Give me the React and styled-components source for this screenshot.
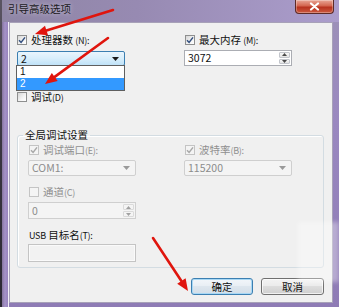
import React from "react";
import styled, { createGlobalStyle, css } from "styled-components";

const GlobalStyle = createGlobalStyle`
  html, body { margin: 0; padding: 0; }
  body {
    background: #2e2a36;
    font-family: "Noto Sans CJK SC", "Noto Sans", sans-serif;
  }
  *, *::before, *::after { box-sizing: border-box; }
`;

const FONT = `"Noto Sans CJK SC", "Noto Sans", sans-serif`;

const Screen = styled.div`
  position: relative;
  width: 339px;
  height: 307px;
  overflow: hidden;
  display: flex;
`;

const DesktopEdge = styled.div`
  width: 3px;
  background: linear-gradient(180deg, #5a5462 0%, #3a3642 45%, #2b2833 100%);
`;

const Frame = styled.div`
  flex: 1;
  display: flex;
  flex-direction: column;
  padding: 0 6px 4px 7px;
  background:
    linear-gradient(90deg, #86759f 0px, #a592c8 3px, #9783bd 6px, #f2eff8 6px, #f2eff8 7px, transparent 7px),
    linear-gradient(180deg, #9d92b7 0%, #9a88c0 40%, #8e7bb5 100%);
`;

const TitleBar = styled.div`
  height: 22px;
  margin: 0 -6px 0 -7px;
  padding: 0 5px 0 6px;
  display: flex;
  align-items: flex-start;
  justify-content: space-between;
  background: linear-gradient(90deg, #8f86a5 0%, #978ab2 40%, #ab9dcc 100%);
`;

const Title = styled.span`
  margin-top: 2px;
  font-family: ${FONT};
  font-size: 10.5px;
  line-height: 14px;
  color: #1c1a22;
  text-shadow: 0 0 5px rgba(255, 255, 255, 0.55);
`;

const CloseButton = styled.div`
  width: 39px;
  height: 14px;
  display: flex;
  align-items: center;
  justify-content: center;
  border: 1px solid #5d2a26;
  border-top: none;
  border-radius: 0 0 4px 4px;
  background: linear-gradient(180deg, #e9a797 0%, #d3654f 45%, #b7321f 55%, #cc5a40 100%);
  box-shadow: inset 0 0 0 1px rgba(255, 255, 255, 0.3);
`;

const Client = styled.div`
  flex: 1;
  display: flex;
  flex-direction: column;
  background: #f0f0f0;
  border: 1px solid #a7a1b8;
  padding: 10px 8px 7px 7px;
`;

const Columns = styled.div`
  display: grid;
  grid-template-columns: ${(p) => p.$left}px ${(p) => p.$right}px;
  align-items: start;
`;

const Stack = styled.div`
  display: flex;
  flex-direction: column;
`;

const Slot = styled.div`
  position: relative;
  margin-top: ${(p) => p.$mt || 0}px;
`;

const CheckRow = styled.label`
  height: 14px;
  display: flex;
  align-items: center;
  gap: 4px;
  padding-left: ${(p) => p.$inset || 0}px;
  font-family: ${FONT};
  font-size: 10.5px;
  line-height: 14px;
  white-space: nowrap;
  color: ${(p) => (p.$disabled ? "#8f8f8f" : "#111")};
`;

const Box = styled.span`
  width: 10px;
  height: 10px;
  flex: none;
  display: flex;
  align-items: center;
  justify-content: center;
  border: 1px solid ${(p) => (p.$disabled ? "#c4c4c4" : "#8e8f8f")};
  background: ${(p) =>
    p.$disabled ? "#f4f4f4" : "linear-gradient(135deg, #d6d6d6 0%, #f4f4f4 60%, #ffffff 100%)"};
`;

const PlainLabel = styled.div`
  height: 14px;
  font-family: ${FONT};
  font-size: 10.5px;
  line-height: 14px;
  white-space: nowrap;
  color: #111;
  padding-left: 1px;
`;

const Small = styled.span`
  font-size: 9px;
  letter-spacing: -0.3px;
`;

const fieldBase = css`
  width: 108px;
  height: ${(p) => p.$h || 15}px;
  display: flex;
  align-items: center;
  font-family: ${FONT};
  font-size: 10.5px;
  line-height: 12px;
`;

const Combo = styled.div`
  ${fieldBase};
  justify-content: space-between;
  padding: 0 5px 0 3px;
  border-radius: 2px;
  border: 1px solid #adadad;
  background: linear-gradient(180deg, #f2f2f2, #e2e2e2);
  color: #111;
  ${(p) =>
    p.$open &&
    css`
      border-color: #3c7fb1;
      background: linear-gradient(180deg, #eaf5fd 0%, #d8eefb 50%, #bfe2f8 100%);
    `}
  ${(p) =>
    p.$disabled &&
    css`
      border-color: #cfcfcf;
      background: #f4f4f4;
      color: #8c8c8c;
    `}
`;

const DropList = styled.div`
  position: absolute;
  left: -1px;
  top: calc(100% - 1px);
  width: 109px;
  background: #ffffff;
  border: 1px solid #5f5f5f;
  z-index: 2;
`;

const DropItem = styled.div`
  height: 12px;
  padding-left: 3px;
  font-family: "Liberation Sans", Arial, sans-serif;
  font-size: 10px;
  line-height: 12px;
  color: ${(p) => (p.$selected ? "#fff" : "#111")};
  background: ${(p) => (p.$selected ? "#3399ff" : "transparent")};
`;

const SpinBox = styled.div`
  ${fieldBase};
  border: 1px solid ${(p) => (p.$disabled ? "#cfcfcf" : "#abadb3")};
  background: ${(p) => (p.$disabled ? "#f4f4f4" : "#ffffff")};
  color: ${(p) => (p.$disabled ? "#8c8c8c" : "#111")};
`;

const SpinText = styled.span`
  flex: 1;
  padding-left: 3px;
`;

const SpinButtons = styled.div`
  width: 12px;
  align-self: stretch;
  display: flex;
  flex-direction: column;
  padding: 1px 1px 1px 0;
  gap: 1px;
`;

const SpinButton = styled.div`
  flex: 1;
  display: flex;
  align-items: center;
  justify-content: center;
  border: 1px solid ${(p) => (p.$disabled ? "#dadada" : "#c3c6cc")};
  border-radius: 1px;
  background: ${(p) => (p.$disabled ? "#f4f4f4" : "linear-gradient(180deg, #f7f7f7, #e4e4e4)")};
`;

const TextBox = styled.div`
  ${fieldBase};
  border: 1px solid #c4c4c4;
  background: #f2f2f2;
  box-shadow: inset 0 0 0 1px #fafafa;
`;

const Group = styled.fieldset`
  margin: 24px 0 0 0;
  padding: 0;
  width: 307px;
  border: 1px solid #d3dce2;
  border-radius: 3px;
  box-shadow: inset 1px 1px 0 #ffffff;
`;

const GroupTitle = styled.legend`
  margin-left: 5px;
  padding: 0 2px;
  font-family: ${FONT};
  font-size: 10.5px;
  line-height: 14px;
  color: #111;
`;

const GroupBody = styled.div`
  padding: 1px 0 5px 10px;
`;

const ButtonRow = styled.div`
  margin-top: auto;
  display: flex;
  justify-content: flex-end;
  gap: 8px;
`;

const Button = styled.button`
  width: ${(p) => p.$w}px;
  height: 17px;
  padding: 0;
  font-family: ${FONT};
  font-size: 10.5px;
  line-height: 13px;
  color: #111;
  border-radius: 3px;
  border: 1px solid #707070;
  background: linear-gradient(180deg, #f3f3f3 0%, #ebebeb 49%, #dddddd 50%, #cfcfcf 100%);
  box-shadow: inset 0 0 0 1px rgba(255, 255, 255, 0.7);
  ${(p) =>
    p.$default &&
    css`
      border-color: #3c7fb1;
      background: linear-gradient(180deg, #f2f6fa 0%, #e8eef4 49%, #dde6ee 50%, #d3dee8 100%);
      box-shadow: inset 0 0 0 1px #a8d8f5;
    `}
`;

const Annotations = styled.svg`
  position: absolute;
  left: 0;
  top: 0;
  width: 339px;
  height: 307px;
  pointer-events: none;
  z-index: 5;
`;

const Watermark = styled.div`
  position: absolute;
  left: 298px;
  top: 222px;
  width: 41px;
  height: 60px;
  background: rgba(255, 255, 255, 0.35);
  filter: blur(2px);
  z-index: 4;
`;

function Checkbox({ checked, disabled, inset, children }) {
  return (
    <CheckRow $disabled={disabled} $inset={inset}>
      <Box $disabled={disabled}>
        {checked && (
          <svg width="8" height="8" viewBox="0 0 8 8">
            <path
              d="M1 4.2 L3.1 6.4 L7 1.4"
              fill="none"
              stroke={disabled ? "#a8a8a8" : "#34507f"}
              strokeWidth="1.5"
            />
          </svg>
        )}
      </Box>
      <span>{children}</span>
    </CheckRow>
  );
}

function DownArrow({ disabled }) {
  return (
    <svg width="7" height="4" viewBox="0 0 7 4">
      <path d="M0 0 H7 L3.5 4 Z" fill={disabled ? "#9a9a9a" : "#1a1a1a"} />
    </svg>
  );
}

function Spin({ value, disabled, h }) {
  return (
    <SpinBox $disabled={disabled} $h={h}>
      <SpinText>{value}</SpinText>
      <SpinButtons>
        <SpinButton $disabled={disabled}>
          <svg width="5" height="3" viewBox="0 0 5 3">
            <path d="M0 3 H5 L2.5 0 Z" fill={disabled ? "#a0a0a0" : "#4a4a4a"} />
          </svg>
        </SpinButton>
        <SpinButton $disabled={disabled}>
          <svg width="5" height="3" viewBox="0 0 5 3">
            <path d="M0 0 H5 L2.5 3 Z" fill={disabled ? "#a0a0a0" : "#4a4a4a"} />
          </svg>
        </SpinButton>
      </SpinButtons>
    </SpinBox>
  );
}

const arrows = [
  { line: [113, 10, 46.5, 30.5], head: "35,34 48,35.3 45,25.7" },
  { line: [108, 38, 54.7, 76.9], head: "45,84 57.7,80.9 51.8,72.9" },
  { line: [153, 238, 181.4, 281], head: "188,291 185.6,278.2 177.2,283.8" },
];

export default function App() {
  return (
    <>
      <GlobalStyle />
      <Screen>
        <DesktopEdge />
        <Frame>
          <TitleBar>
            <Title>引导高级选项</Title>
            <CloseButton>
              <svg width="11" height="9" viewBox="0 0 11 9">
                <path
                  d="M2 1.5 L9 7.5 M9 1.5 L2 7.5"
                  stroke="#ffffff"
                  strokeWidth="2.2"
                  strokeLinecap="round"
                />
              </svg>
            </CloseButton>
          </TitleBar>
          <Client>
            <Columns $left={167} $right={108}>
              <Stack>
                <Checkbox checked>
                  处理器数 <Small>(N):</Small>
                </Checkbox>
                <Slot $mt={4}>
                  <Combo $open $h={15}>
                    <span>2</span>
                    <DownArrow />
                  </Combo>
                  <DropList>
                    <DropItem>1</DropItem>
                    <DropItem $selected>2</DropItem>
                  </DropList>
                </Slot>
                <Slot $mt={24}>
                  <Checkbox>
                    调试<Small>(D)</Small>
                  </Checkbox>
                </Slot>
              </Stack>
              <Stack>
                <Checkbox checked inset={1}>
                  最大内存 <Small>(M):</Small>
                </Checkbox>
                <Slot $mt={3}>
                  <Spin value="3072" h={16} />
                </Slot>
              </Stack>
            </Columns>

            <Group>
              <GroupTitle>全局调试设置</GroupTitle>
              <GroupBody>
                <Columns $left={156} $right={108}>
                  <Stack>
                    <Checkbox checked disabled inset={1}>
                      调试端口<Small>(E):</Small>
                    </Checkbox>
                    <Slot $mt={3}>
                      <Combo $disabled $h={16}>
                        <span>COM1:</span>
                        <DownArrow disabled />
                      </Combo>
                    </Slot>
                    <Slot $mt={9}>
                      <Checkbox disabled inset={1}>
                        通道<Small>(C)</Small>
                      </Checkbox>
                    </Slot>
                    <Slot $mt={3}>
                      <Spin value="0" disabled h={17} />
                    </Slot>
                    <Slot $mt={9}>
                      <PlainLabel>
                        <Small>USB</Small> 目标名<Small>(T):</Small>
                      </PlainLabel>
                    </Slot>
                    <Slot $mt={2}>
                      <TextBox $h={18} />
                    </Slot>
                  </Stack>
                  <Stack>
                    <Checkbox checked disabled inset={1}>
                      波特率<Small>(B):</Small>
                    </Checkbox>
                    <Slot $mt={3}>
                      <Combo $disabled $h={16}>
                        <span>115200</span>
                        <DownArrow disabled />
                      </Combo>
                    </Slot>
                  </Stack>
                </Columns>
              </GroupBody>
            </Group>

            <ButtonRow>
              <Button $w={62} $default>
                确定
              </Button>
              <Button $w={63}>取消</Button>
            </ButtonRow>
          </Client>
        </Frame>
        <Watermark />
        <Annotations viewBox="0 0 339 307">
          {arrows.map((a, i) => (
            <g key={i}>
              <line
                x1={a.line[0]}
                y1={a.line[1]}
                x2={a.line[2]}
                y2={a.line[3]}
                stroke="#e0150d"
                strokeWidth="2.6"
                strokeLinecap="round"
              />
              <polygon points={a.head} fill="#e0150d" />
            </g>
          ))}
        </Annotations>
      </Screen>
    </>
  );
}
